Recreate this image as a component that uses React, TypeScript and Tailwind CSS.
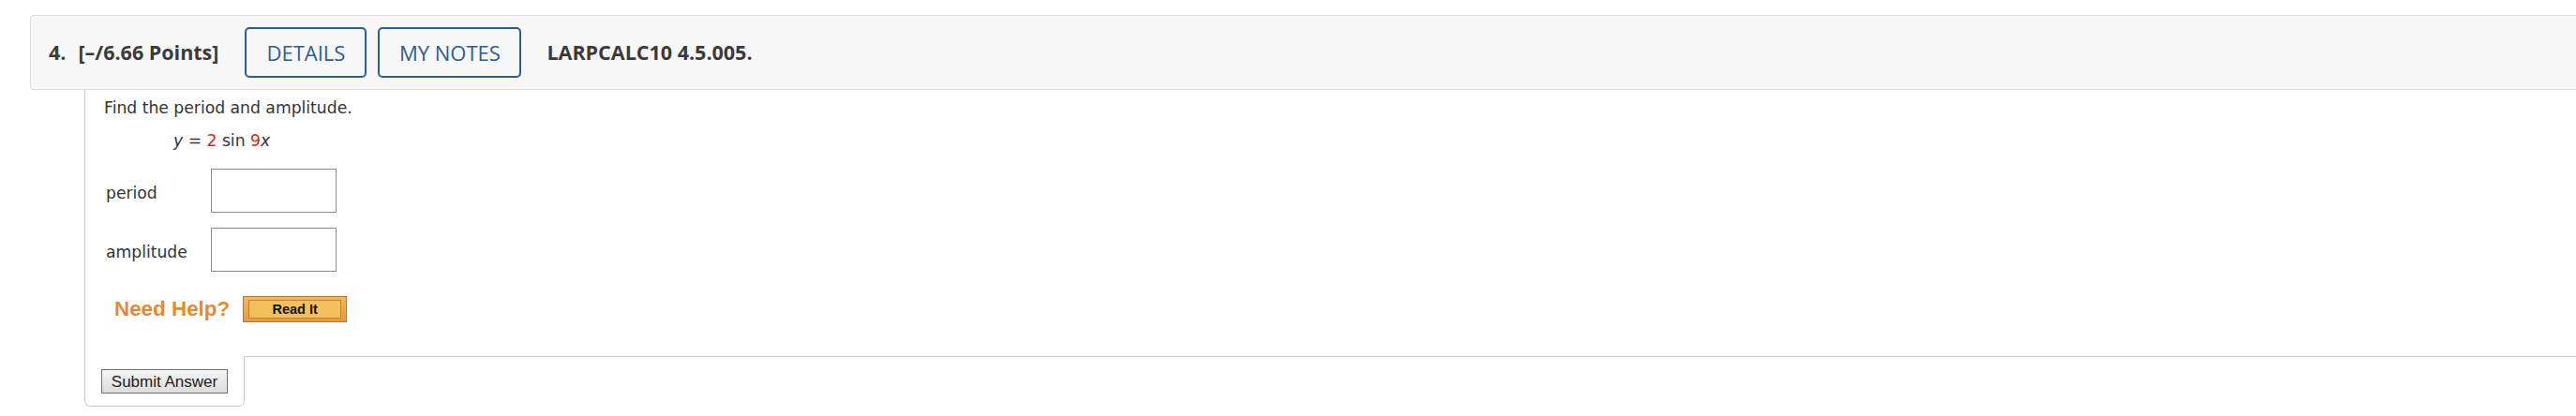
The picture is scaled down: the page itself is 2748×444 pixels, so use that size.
import React from "react";

export default function App() {
  return (
    <div className="w-full min-h-[444px] bg-white pt-[16px]">
      {/* Header bar */}
      <div
        className="ml-[32px] h-[80px] flex items-center border-l border-y border-[#dcdcdc] rounded-l-[4px] bg-[#f7f7f7] pl-[19px] text-[#3a3a3a]"
        style={{ fontFamily: '"Open Sans", sans-serif' }}
      >
        <span className="text-[21.5px] font-bold">4.</span>
        <span className="ml-[13px] text-[21.5px] font-bold">[–/6.66 Points]</span>
        <button className="ml-[28px] h-[54px] w-[130px] rounded-[5px] border-2 border-[#2b5f93] bg-transparent text-[22px] text-[#2b5f93]">
          DETAILS
        </button>
        <button className="ml-[12px] h-[54px] w-[153px] rounded-[5px] border-2 border-[#2b5f93] bg-transparent text-[22px] text-[#2b5f93]">
          MY NOTES
        </button>
        <span className="ml-[27px] text-[21.5px] font-bold">LARPCALC10 4.5.005.</span>
      </div>

      {/* Question body */}
      <div className="ml-[90px]">
        <div
          className="h-[285px] border-l border-b border-[#cccccc] pl-[20px] text-[#333333] text-[17.2px]"
          style={{ fontFamily: '"DejaVu Sans", Verdana, sans-serif' }}
        >
          <p className="pt-[7px] leading-[25px]">Find the period and amplitude.</p>
          <div className="mt-[10px] pl-[74px] leading-[25px]">
            <span className="italic">y</span> = <span className="text-[#d42a20]">2</span> sin{" "}
            <span className="text-[#d42a20]">9</span>
            <span className="italic">x</span>
          </div>

          <div className="mt-[17px] flex items-center">
            <span className="w-[114px] pl-[2px] pt-[5px] leading-[25px]">period</span>
            <input
              type="text"
              className="h-[47px] w-[134px] border border-[#8a8a8a] bg-white outline-none"
            />
          </div>
          <div className="mt-[16px] flex items-center">
            <span className="w-[114px] pl-[2px] pt-[5px] leading-[25px]">amplitude</span>
            <input
              type="text"
              className="h-[47px] w-[134px] border border-[#8a8a8a] bg-white outline-none"
            />
          </div>

          <div className="mt-[26px] flex items-center pl-[11px]">
            <span
              className="text-[22.4px] font-bold text-[#e8892e] leading-[28px]"
              style={{ fontFamily: '"Liberation Sans", Arial, sans-serif' }}
            >
              Need Help?
            </span>
            <button
              className="ml-[14px] h-[28px] w-[111px] border border-[#b8762e] bg-gradient-to-b from-[#f6b55a] to-[#e99a3c] p-[3px_5px]"
              style={{ fontFamily: '"Liberation Sans", Arial, sans-serif' }}
            >
              <span className="flex h-full w-full items-center justify-center border border-[#c0843a] bg-[#f4c05c] text-[14.5px] font-bold text-[#111] leading-none">
                Read It
              </span>
            </button>
          </div>
        </div>

        {/* Submit tab */}
        <div className="relative -mt-px w-[171px] h-[54px] border-l border-r border-b border-[#cccccc] rounded-b-[6px] bg-white pl-[17px] pt-[14px]">
          <button
            className="h-[26px] w-[135px] border border-[#707070] bg-gradient-to-b from-[#f5f5f5] to-[#dcdcdc] text-[17px] text-[#222] leading-none"
            style={{ fontFamily: '"Liberation Sans", Arial, sans-serif' }}
          >
            Submit Answer
          </button>
        </div>
      </div>
    </div>
  );
}
